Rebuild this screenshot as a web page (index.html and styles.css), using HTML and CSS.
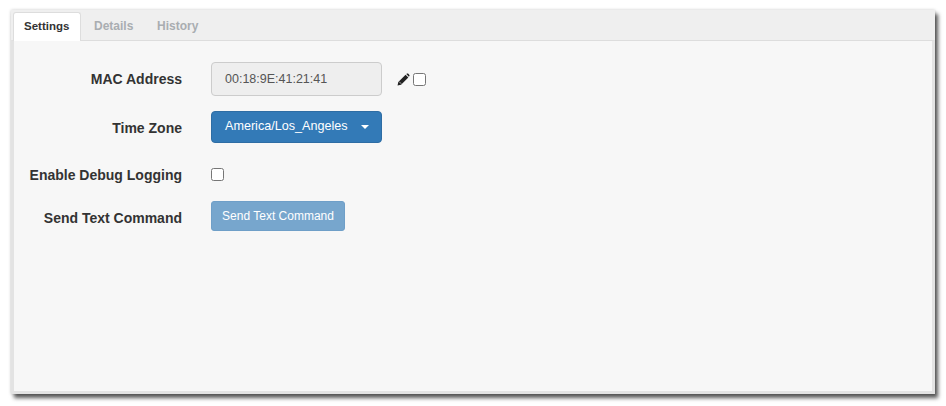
FILE: index.html
```html
<!DOCTYPE html>
<html lang="en">
<head>
<meta charset="utf-8">
<title>Settings</title>
<link rel="stylesheet" href="styles.css">
</head>
<body>
<div class="window">
  <ul class="tabs">
    <li class="tab active">Settings</li>
    <li class="tab">Details</li>
    <li class="tab">History</li>
  </ul>
  <div class="panel">
    <div class="row row-mac">
      <label class="label">MAC Address</label>
      <div class="control">
        <div class="input">00:18:9E:41:21:41</div>
        <svg class="pencil" viewBox="0 0 14 14" width="13" height="13" aria-hidden="true">
          <path fill="#222" d="M0.6 13.4 1.4 9.6 9.2 1.8 12.2 4.8 4.4 12.6Z"/>
          <path fill="#222" d="M10.4 0.9C11 0.3 11.6 0.3 12.2 0.9L13.1 1.8C13.7 2.4 13.7 3 13.1 3.6L12.8 4 10 1.2Z"/>
          <path fill="none" stroke="#f7f7f7" stroke-width="0.7" d="M2.4 9.4 4.6 11.6"/>
        </svg>
        <span class="check"></span>
      </div>
    </div>
    <div class="row row-zone">
      <label class="label">Time Zone</label>
      <div class="control">
        <button class="dropdown">America/Los_Angeles<span class="caret"></span></button>
      </div>
    </div>
    <div class="row row-debug">
      <label class="label">Enable Debug Logging</label>
      <div class="control"><span class="check"></span></div>
    </div>
    <div class="row row-send">
      <label class="label">Send Text Command</label>
      <div class="control"><button class="send">Send Text Command</button></div>
    </div>
  </div>
</div>
</body>
</html>
```
FILE: styles.css
```css
* { box-sizing: border-box; }
html, body { margin: 0; height: 100%; background: #fff; }
body {
  padding: 10px 11px 12px 11px;
  font-family: "Liberation Sans", Arial, sans-serif;
  color: #333;
  overflow: hidden;
}
.window {
  height: 384px;
  display: flex;
  flex-direction: column;
  background: #efefef;
  box-shadow: 3px 4px 4px rgba(0, 0, 0, 0.65), 0 0 3px rgba(0, 0, 0, 0.2);
}
.tabs {
  display: flex;
  list-style: none;
  margin: 0;
  padding: 2px 0 0 2px;
  height: 30px;
  flex: none;
  position: relative;
  z-index: 1;
}
.tab {
  padding: 7px 13px 0;
  height: 28px;
  width: 70px;
  font-size: 12px;
  font-weight: bold;
  color: #a9adb1;
  text-align: left;
}
.tab:nth-child(2) { width: 63px; }
.active {
  width: 68px;
  height: 29px;
  padding: 7px 10px 0;
  margin-bottom: -1px;
  font-size: 11.5px;
  background: #fff;
  color: #333;
  border: 1px solid #ddd;
  border-bottom: 0;
  border-radius: 3px 3px 0 0;
}
.panel {
  flex: 1;
  background: #f7f7f7;
  border: 3px solid #e3e3e3;
  border-top: 1px solid #ddd;
  padding-top: 21px;
}
.row { display: flex; align-items: flex-start; }
.label {
  width: 168px;
  margin-right: 29px;
  flex: none;
  text-align: right;
  font-size: 14px;
  font-weight: bold;
  color: #333;
  line-height: 20px;
}
.control { display: flex; align-items: center; }
.row-mac { height: 49px; }
.row-mac .label { padding-top: 7px; }
.row-zone { height: 50px; }
.row-zone .label { padding-top: 7px; }
.row-debug { height: 40px; }
.row-debug .label { padding-top: 4px; }
.row-debug .control { padding-top: 7px; }
.row-send .label { padding-top: 7px; }
.input {
  width: 171px;
  height: 34px;
  padding: 0 13px;
  line-height: 32px;
  font-size: 12.5px;
  color: #555;
  background: #eee;
  border: 1px solid #ccc;
  border-radius: 4px;
}
.pencil { margin: 1px 3px 0 15px; }
.check {
  display: block;
  width: 13px;
  height: 13px;
  background: #fff;
  border: 1px solid #767676;
  border-radius: 2.5px;
}
button { font-family: inherit; cursor: pointer; }
.dropdown {
  display: flex;
  align-items: center;
  width: 171px;
  height: 32px;
  padding: 0 13px 2px;
  font-size: 12.6px;
  color: #fff;
  background: #337ab7;
  border: 1px solid #2e6da4;
  border-radius: 4px;
  margin-bottom: 3px;
}
.caret {
  margin-left: 13px;
  margin-top: 2px;
  border-top: 4px solid #fff;
  border-left: 4px solid transparent;
  border-right: 4px solid transparent;
  width: 0;
  height: 0;
}
.send {
  width: 134px;
  height: 30px;
  padding: 0 0 1px;
  font-size: 12px;
  color: #fff;
  background: #77a6cd;
  border: 1px solid #6f9fc8;
  border-radius: 3px;
  margin-bottom: 2px;
}
```
